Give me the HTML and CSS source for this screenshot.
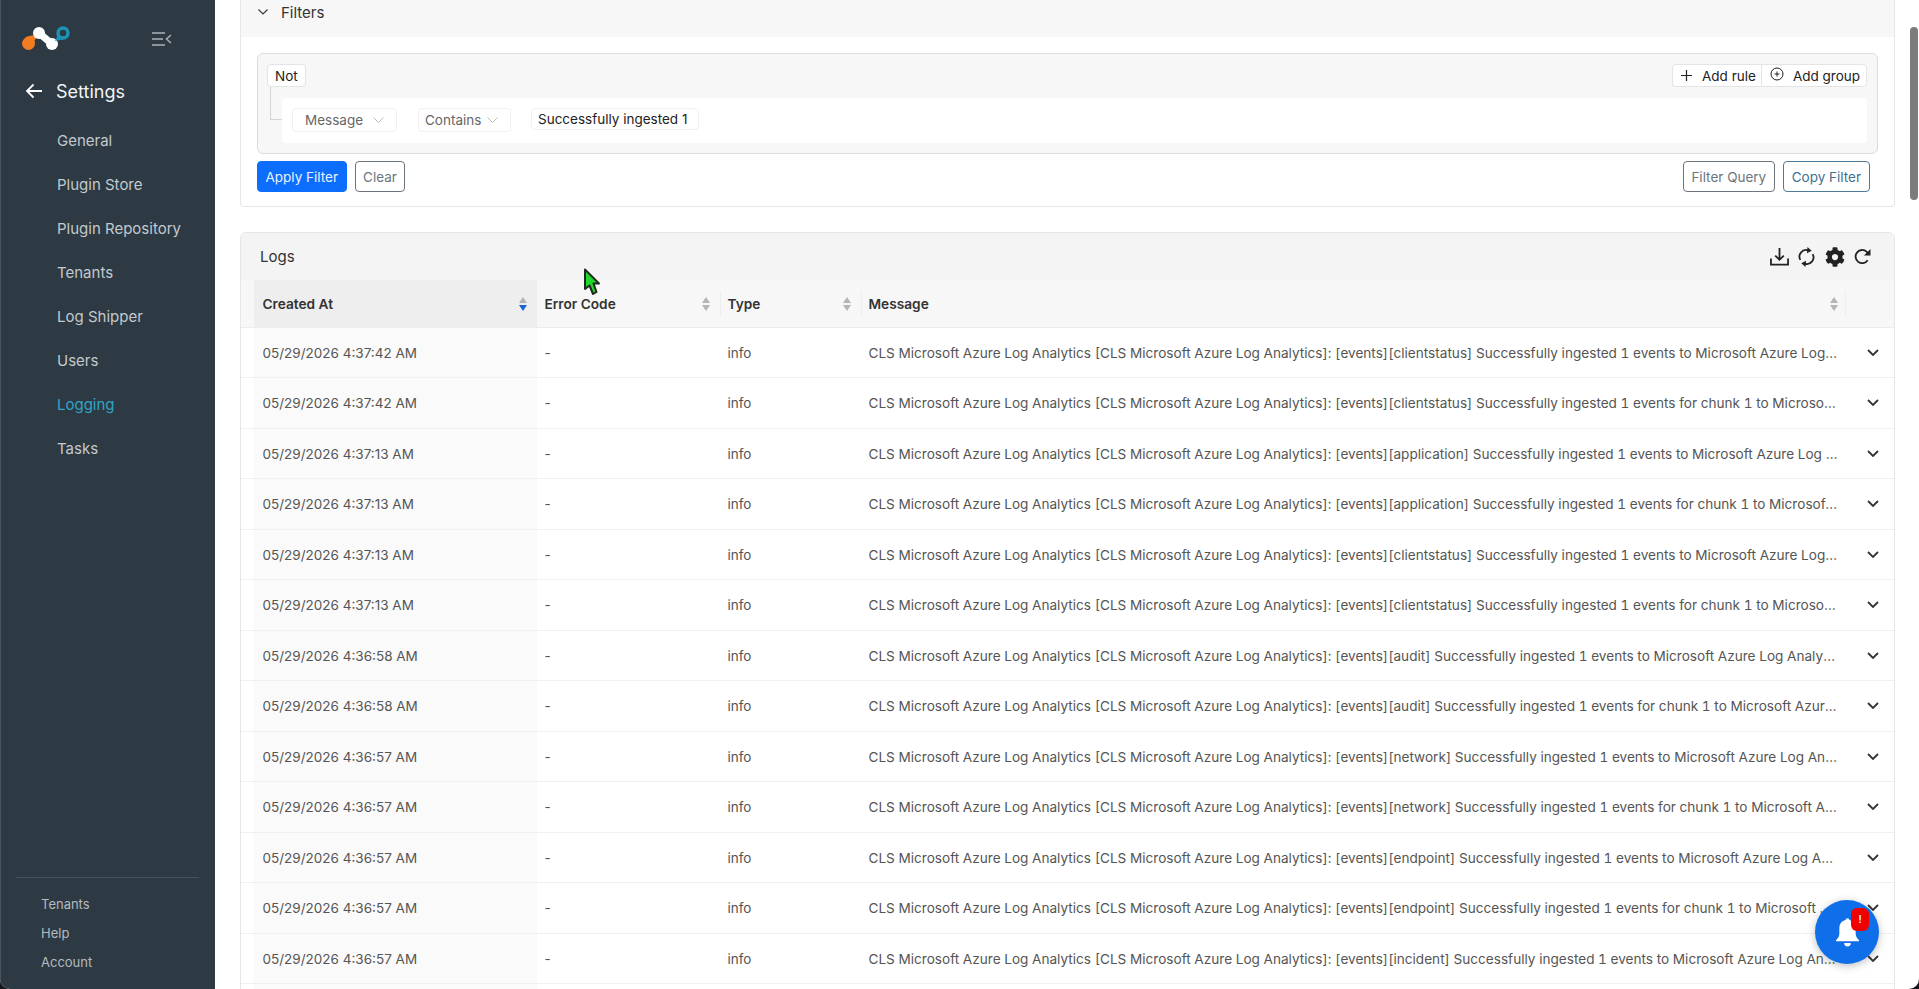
FILE: index.html
```html
<!DOCTYPE html>
<html lang="en">
<head>
    <meta charset="UTF-8">
    <title>Settings - Logging</title>
    <link rel="stylesheet" href="styles.css">
</head>
<body>
    <div class="app">
        <aside class="sidebar">
            <div class="brand">
                <svg class="logo" width="52" height="28" viewBox="0 0 52 28">
                    <path d="M5 11.500C2 13.500 0 15.500 0 18.500a6.500 6.500 0 0 0 13 0c0-1 0-2-.5-3L17 9z" fill="#f47c20"/>
                    <path d="M17 8L30 19" stroke="#fff" stroke-width="7"/>
                    <circle cx="17" cy="8" r="6" fill="#fff"/>
                    <circle cx="30" cy="19" r="6" fill="#fff"/>
                    <path d="M33 16L37 8l6 6z" fill="#1a93b5"/>
                    <circle cx="41" cy="8" r="5" fill="#2d3943" stroke="#1a93b5" stroke-width="3.500"/>
                </svg>
                <svg class="toggle" width="20" height="14" viewBox="0 0 20 14" fill="none" stroke="#a9b2b8" stroke-width="1.500">
                    <path d="M0 1h13M0 7h11M0 13h13M19 3l-4.500 4 4.500 4"/>
                </svg>
            </div>
            <div class="back-row">
                <svg width="18" height="16" viewBox="0 0 18 16" fill="none" stroke="#fff" stroke-width="1.800">
                    <path d="M17 8H2M8.500 1.500L2 8l6.500 6.500"/>
                </svg>
                <span class="back-title">Settings</span>
            </div>
            <nav class="side-nav">
                <a>General</a>
                <a>Plugin Store</a>
                <a>Plugin Repository</a>
                <a>Tenants</a>
                <a>Log Shipper</a>
                <a>Users</a>
                <a class="active">Logging</a>
                <a>Tasks</a>
            </nav>
            <div class="side-foot">
                <a>Tenants</a>
                <a>Help</a>
                <a>Account</a>
            </div>
        </aside>

        <main class="content">
            <section class="card">
                <div class="card-head filters-head">
                    <svg width="10" height="6" viewBox="0 0 10 6" fill="none" stroke="#333" stroke-width="1.100"><path d="M.5.5L5 5 9.500.5"/></svg>
                    <span>Filters</span>
                </div>
                <div class="filter-body">
                    <div class="query-box">
                        <div class="query-top">
                            <button class="qb-btn">Not</button>
                            <div class="qb-group">
                                <button class="qb-btn">
                                    <svg width="13" height="13" viewBox="0 0 13 13" stroke="#222" stroke-width="1.200"><path d="M6.500 1v11M1 6.500h11"/></svg>
                                    Add rule
                                </button>
                                <button class="qb-btn">
                                    <svg class="group-icon" width="14" height="14" viewBox="0 0 14 14" fill="none" stroke="#222"><circle cx="7" cy="7" r="6"/><path d="M7 4.500v5M4.500 7h5"/></svg>
                                    Add group
                                </button>
                            </div>
                        </div>
                        <div class="rule-row">
                            <span class="rule-line"></span>
                            <div class="rule-select field-select">Message
                                <svg width="11" height="7" viewBox="0 0 11 7" fill="none" stroke="#bbb"><path d="M.5.500l5 5 5-5"/></svg>
                            </div>
                            <div class="rule-select op-select">Contains
                                <svg width="11" height="7" viewBox="0 0 11 7" fill="none" stroke="#bbb"><path d="M.5.500l5 5 5-5"/></svg>
                            </div>
                            <div class="rule-value">Successfully ingested 1</div>
                        </div>
                    </div>
                    <div class="filter-actions">
                        <button class="btn btn-primary">Apply Filter</button>
                        <button class="btn">Clear</button>
                        <span class="spacer"></span>
                        <button class="btn">Filter Query</button>
                        <button class="btn btn-copy">Copy Filter</button>
                    </div>
                </div>
            </section>

            <section class="card logs-card">
                <div class="card-head logs-head">
                    <span>Logs</span>
                    <div class="log-tools">
                        <svg width="19" height="19" viewBox="0 0 20 20" fill="none" stroke="#222" stroke-width="1.900"><path d="M1 12v6.500h18V12M10 1v12M5.500 9l4.500 4.500L14.500 9"/></svg>
                        <svg width="17" height="20" viewBox="0 0 18 21" fill="none" stroke="#222" stroke-width="1.900"><path d="M2.500 13.500A7 7 0 0 1 11 3.500M15.500 7.500A7 7 0 0 1 7 17.500"/><path d="M10 0l4.500 4L9.500 6.500zM8 21l-4.500-4L8.500 14.500z" fill="#222" stroke="none"/></svg>
                        <svg width="20" height="20" viewBox="0 0 512 512" fill="#222"><path d="M487.400 315.700l-42.600-24.600c4.300-23.200 4.300-47 0-70.200l42.600-24.600c4.900-2.800 7.100-8.600 5.500-14-11.100-35.600-30-67.800-54.700-94.600-3.800-4.100-10-5.100-14.800-2.300L380.800 110c-17.900-15.400-38.500-27.300-60.800-35.100V25.800c0-5.600-3.900-10.500-9.400-11.700-36.700-8.200-74.300-7.800-109.200 0-5.500 1.200-9.400 6.100-9.400 11.700V75c-22.200 7.900-42.800 19.800-60.800 35.100L88.700 85.500c-4.900-2.800-11-1.900-14.800 2.300-24.700 26.700-43.600 58.900-54.700 94.600-1.700 5.400.6 11.200 5.500 14L67.300 221c-4.300 23.200-4.300 47 0 70.200l-42.600 24.600c-4.900 2.800-7.100 8.600-5.500 14 11.100 35.600 30 67.800 54.700 94.600 3.800 4.100 10 5.100 14.800 2.300l42.600-24.600c17.900 15.400 38.500 27.300 60.800 35.100v49.200c0 5.600 3.900 10.500 9.400 11.700 36.700 8.200 74.300 7.800 109.200 0 5.500-1.200 9.400-6.100 9.400-11.700v-49.200c22.200-7.900 42.800-19.800 60.800-35.100l42.600 24.600c4.900 2.800 11 1.900 14.800-2.300 24.700-26.700 43.600-58.900 54.700-94.600 1.500-5.500-.7-11.300-5.600-14.100zM256 336c-44.100 0-80-35.900-80-80s35.900-80 80-80 80 35.900 80 80-35.900 80-80 80z"/></svg>
                        <svg width="17" height="17" viewBox="0 0 18 17" fill="none" stroke="#222" stroke-width="1.900"><path d="M14.500 12.500A7 7 0 1 1 13.500 3.500L16 6"/><path d="M17.500.5v7h-7z" fill="#222" stroke="none"/></svg>
                    </div>
                </div>
                <table class="log-table">
                    <colgroup>
                        <col class="c-pad"><col class="c-created"><col class="c-code"><col class="c-type"><col><col class="c-open">
                    </colgroup>
                    <thead>
                        <tr>
                            <th></th>
                            <th class="sorted"><div class="th-in">Created At<span class="sorter"><i class="up"></i><i class="down on"></i></span></div></th>
                            <th><div class="th-in">Error Code<span class="sorter"><i class="up"></i><i class="down"></i></span></div></th>
                            <th class="div-left"><div class="th-in">Type<span class="sorter"><i class="up"></i><i class="down"></i></span></div></th>
                            <th class="div-left"><div class="th-in th-last">Message<span class="sorter"><i class="up"></i><i class="down"></i></span></div></th>
                            <th class="div-left"></th>
                        </tr>
                    </thead>
                    <tbody>
                        <tr><td></td><td class="sorted">05/29/2026 4:37:42 AM</td><td>-</td><td>info</td><td class="msg">CLS Microsoft Azure Log Analytics [CLS Microsoft Azure Log Analytics]: [events][clientstatus] Successfully ingested 1 events to Microsoft Azure Log Analytics</td><td class="open"><svg width="12" height="7" viewBox="0 0 12 7"><path d="M1 1l5 5 5-5"/></svg></td></tr>
                        <tr><td></td><td class="sorted">05/29/2026 4:37:42 AM</td><td>-</td><td>info</td><td class="msg">CLS Microsoft Azure Log Analytics [CLS Microsoft Azure Log Analytics]: [events][clientstatus] Successfully ingested 1 events for chunk 1 to Microsoft Azure Log Analytics</td><td class="open"><svg width="12" height="7" viewBox="0 0 12 7"><path d="M1 1l5 5 5-5"/></svg></td></tr>
                        <tr><td></td><td class="sorted">05/29/2026 4:37:13 AM</td><td>-</td><td>info</td><td class="msg">CLS Microsoft Azure Log Analytics [CLS Microsoft Azure Log Analytics]: [events][application] Successfully ingested 1 events to Microsoft Azure Log Analytics</td><td class="open"><svg width="12" height="7" viewBox="0 0 12 7"><path d="M1 1l5 5 5-5"/></svg></td></tr>
                        <tr><td></td><td class="sorted">05/29/2026 4:37:13 AM</td><td>-</td><td>info</td><td class="msg">CLS Microsoft Azure Log Analytics [CLS Microsoft Azure Log Analytics]: [events][application] Successfully ingested 1 events for chunk 1 to Microsoft Azure Log Analytics</td><td class="open"><svg width="12" height="7" viewBox="0 0 12 7"><path d="M1 1l5 5 5-5"/></svg></td></tr>
                        <tr><td></td><td class="sorted">05/29/2026 4:37:13 AM</td><td>-</td><td>info</td><td class="msg">CLS Microsoft Azure Log Analytics [CLS Microsoft Azure Log Analytics]: [events][clientstatus] Successfully ingested 1 events to Microsoft Azure Log Analytics</td><td class="open"><svg width="12" height="7" viewBox="0 0 12 7"><path d="M1 1l5 5 5-5"/></svg></td></tr>
                        <tr><td></td><td class="sorted">05/29/2026 4:37:13 AM</td><td>-</td><td>info</td><td class="msg">CLS Microsoft Azure Log Analytics [CLS Microsoft Azure Log Analytics]: [events][clientstatus] Successfully ingested 1 events for chunk 1 to Microsoft Azure Log Analytics</td><td class="open"><svg width="12" height="7" viewBox="0 0 12 7"><path d="M1 1l5 5 5-5"/></svg></td></tr>
                        <tr><td></td><td class="sorted">05/29/2026 4:36:58 AM</td><td>-</td><td>info</td><td class="msg">CLS Microsoft Azure Log Analytics [CLS Microsoft Azure Log Analytics]: [events][audit] Successfully ingested 1 events to Microsoft Azure Log Analytics</td><td class="open"><svg width="12" height="7" viewBox="0 0 12 7"><path d="M1 1l5 5 5-5"/></svg></td></tr>
                        <tr><td></td><td class="sorted">05/29/2026 4:36:58 AM</td><td>-</td><td>info</td><td class="msg">CLS Microsoft Azure Log Analytics [CLS Microsoft Azure Log Analytics]: [events][audit] Successfully ingested 1 events for chunk 1 to Microsoft Azure Log Analytics</td><td class="open"><svg width="12" height="7" viewBox="0 0 12 7"><path d="M1 1l5 5 5-5"/></svg></td></tr>
                        <tr><td></td><td class="sorted">05/29/2026 4:36:57 AM</td><td>-</td><td>info</td><td class="msg">CLS Microsoft Azure Log Analytics [CLS Microsoft Azure Log Analytics]: [events][network] Successfully ingested 1 events to Microsoft Azure Log Analytics</td><td class="open"><svg width="12" height="7" viewBox="0 0 12 7"><path d="M1 1l5 5 5-5"/></svg></td></tr>
                        <tr><td></td><td class="sorted">05/29/2026 4:36:57 AM</td><td>-</td><td>info</td><td class="msg">CLS Microsoft Azure Log Analytics [CLS Microsoft Azure Log Analytics]: [events][network] Successfully ingested 1 events for chunk 1 to Microsoft Azure Log Analytics</td><td class="open"><svg width="12" height="7" viewBox="0 0 12 7"><path d="M1 1l5 5 5-5"/></svg></td></tr>
                        <tr><td></td><td class="sorted">05/29/2026 4:36:57 AM</td><td>-</td><td>info</td><td class="msg">CLS Microsoft Azure Log Analytics [CLS Microsoft Azure Log Analytics]: [events][endpoint] Successfully ingested 1 events to Microsoft Azure Log Analytics</td><td class="open"><svg width="12" height="7" viewBox="0 0 12 7"><path d="M1 1l5 5 5-5"/></svg></td></tr>
                        <tr><td></td><td class="sorted">05/29/2026 4:36:57 AM</td><td>-</td><td>info</td><td class="msg">CLS Microsoft Azure Log Analytics [CLS Microsoft Azure Log Analytics]: [events][endpoint] Successfully ingested 1 events for chunk 1 to Microsoft Azure Log Analytics</td><td class="open"><svg width="12" height="7" viewBox="0 0 12 7"><path d="M1 1l5 5 5-5"/></svg></td></tr>
                        <tr><td></td><td class="sorted">05/29/2026 4:36:57 AM</td><td>-</td><td>info</td><td class="msg">CLS Microsoft Azure Log Analytics [CLS Microsoft Azure Log Analytics]: [events][incident] Successfully ingested 1 events to Microsoft Azure Log Analytics</td><td class="open"><svg width="12" height="7" viewBox="0 0 12 7"><path d="M1 1l5 5 5-5"/></svg></td></tr>
                        <tr><td></td><td class="sorted"></td><td></td><td></td><td></td><td></td></tr>
                    </tbody>
                </table>
            </section>
        </main>
    </div>

    <div class="fake-scroll"></div>

    <svg class="cursor" width="18" height="28" viewBox="0 0 18 28">
        <path d="M2 1.500L16 15.500H10.500L13.500 24 10 26 6.500 17.500 2 21z" fill="#22d62c" stroke="#1d2a1d" stroke-width="2" stroke-linejoin="round"/>
    </svg>

    <div class="bell-btn">
        <svg width="23" height="29" viewBox="0 0 24 30" fill="#fff">
            <path d="M12 0a2 2 0 0 1 2 2c4.500 1 6.500 4.500 6.500 9v5c0 3 1.500 5 3.500 7v1H0v-1c2-2 3.500-4 3.500-7v-5c0-4.500 2-8 6.500-9a2 2 0 0 1 2-2zM8.500 26h7a3.500 3.500 0 0 1-7 0z"/>
        </svg>
        <span class="bell-badge">!</span>
    </div>
</body>
</html>
```

FILE: styles.css
```css
* {
  box-sizing: border-box;
}

html, body {
  margin: 0;
  height: 100%;
  overflow: hidden;
  background-color: #14161a;
  font-family: Inter, "Liberation Sans", sans-serif;
}

.app {
  display: flex;
  height: 989px;
  background-color: #fff;
  border-radius: 0 0 10px 10px;
  overflow: hidden;
}

/* sidebar */
.sidebar {
  width: 215px;
  flex-shrink: 0;
  display: flex;
  flex-direction: column;
  background-color: #2d3943;
  border-left: 1px solid #4a555e;
}

.brand {
  display: flex;
  align-items: center;
  height: 77px;
  padding: 0 0 0 21px;
}

.toggle {
  margin-left: 78px;
}

.back-row {
  display: flex;
  align-items: center;
  gap: 13px;
  height: 28px;
  padding-left: 24px;
}

.back-title {
  color: #f2f4f5;
  font-size: 18px;
}

.side-nav {
  display: flex;
  flex-direction: column;
  padding: 14px 0 0 56px;
}

.side-nav a {
  height: 44px;
  line-height: 44px;
  font-size: 15px;
  color: #c3c9cd;
}

.side-nav a.active {
  color: #2fa6c4;
}

.side-foot {
  margin: auto 16px 0 15px;
  padding: 12px 0 12px 25px;
  border-top: 1px solid #46525b;
  display: flex;
  flex-direction: column;
}

.side-foot a {
  height: 29px;
  line-height: 29px;
  font-size: 13px;
  color: #b4bbc0;
}

/* main area */
.content {
  flex: 1;
  padding-right: 24px;
  padding-left: 25px;
  min-width: 0;
}

.card {
  border: 1px solid #e6e6e6;
  border-top: none;
  border-radius: 0 0 4px 4px;
  background-color: #fff;
}

.card-head {
  display: flex;
  align-items: center;
  background-color: #f7f7f7;
}

.filters-head {
  height: 37px;
  padding: 0 0 13px 17px;
  gap: 13px;
  font-size: 15px;
  color: #333;
}

.filter-body {
  padding: 16px 16px 14px;
}

.query-box {
  height: 101px;
  padding: 10px 10px 0 9px;
  background-color: #f7f7f7;
  border: 1px solid #dcdcdc;
  border-radius: 6px;
}

.query-top {
  display: flex;
  justify-content: space-between;
  align-items: flex-start;
}

.qb-btn {
  display: flex;
  align-items: center;
  gap: 9px;
  height: 23px;
  padding: 0 7px;
  font-family: inherit;
  font-size: 13.5px;
  white-space: nowrap;
  color: #222;
  background-color: #fff;
  border: 1px solid #e4e4e4;
  border-radius: 4px;
}

.qb-group {
  display: flex;
}

.qb-group .qb-btn:first-child {
  padding-right: 5px;
  border-radius: 4px 0 0 4px;
  border-right: none;
}

.qb-group .qb-btn:last-child {
  padding: 0 6px 0 8px;
  border-radius: 0 4px 4px 0;
}

.group-icon {
  margin-top: -3px;
}

.rule-row {
  position: relative;
  display: flex;
  align-items: flex-start;
  margin: 11px 0 0 15px;
  height: 45px;
  padding: 10px 0 0 10px;
  background-color: #fff;
  border-radius: 4px;
}

.rule-line {
  position: absolute;
  left: -12px;
  top: -11px;
  width: 12px;
  height: 33px;
  border-left: 1px solid #d5d5d5;
  border-bottom: 1px solid #d5d5d5;
}

.rule-select {
  display: flex;
  align-items: center;
  justify-content: space-between;
  height: 24px;
  padding: 0 12px 0 12px;
  font-size: 13.5px;
  color: #666;
  border: 1px solid #f0f0f0;
  border-radius: 4px;
}

.field-select {
  width: 105px;
  margin-right: 21px;
}

.op-select {
  width: 93px;
  margin-right: 20px;
  padding: 0 12px 0 6px;
}

.rule-value {
  width: 168px;
  height: 22px;
  line-height: 20px;
  padding-left: 6px;
  font-size: 13.5px;
  color: #222;
  border: 1px solid #f0f0f0;
  border-radius: 4px;
}

.filter-actions {
  display: flex;
  gap: 8px;
  margin-top: 7px;
  padding-right: 8px;
}

.spacer {
  flex: 1;
}

.btn {
  height: 31px;
  padding: 0 7.5px;
  font-family: inherit;
  font-size: 13.5px;
  color: #6c757d;
  background-color: #fff;
  border: 1px solid #6c757d;
  border-radius: 4px;
}

.btn-primary {
  color: #eaf3ff;
  background-color: #0d6efd;
  border-color: #0d6efd;
}

.btn-copy {
  padding: 0 8px;
  color: #3f6f94;
  border-color: #4c7a99;
}

/* logs */
.logs-card {
  margin-top: 25px;
  border-top: 1px solid #e6e6e6;
  border-radius: 6px 6px 0 0;
}

.logs-head {
  justify-content: space-between;
  height: 47px;
  padding: 0 23px 0 19px;
  font-size: 15px;
  color: #333;
  background-color: #f4f4f4;
  border-radius: 6px 6px 0 0;
}

.log-tools {
  display: flex;
  align-items: center;
  gap: 9.5px;
}

.log-table {
  width: 100%;
  table-layout: fixed;
  border-collapse: collapse;
  font-size: 13.5px;
  color: #555;
}

.c-pad { width: 13px; }
.c-created { width: 283px; }
.c-code { width: 183px; }
.c-type { width: 141px; }
.c-open { width: 49px; }

.log-table th {
  height: 47px;
  padding: 2px 7.5px 0;
  font-size: 13.7px;
  font-weight: 600;
  text-align: left;
  color: #333;
  background-color: #f7f7f7;
  border-bottom: 1px solid #ececec;
  position: relative;
}

.log-table th.sorted {
  padding-left: 8.5px;
  background-color: #eeeeee;
}

.th-in {
  display: flex;
  align-items: center;
  justify-content: space-between;
  padding-right: 3px;
}

.th-in.th-last {
  padding-right: 0;
}

.div-left::before {
  content: "";
  position: absolute;
  left: 0;
  top: 11px;
  bottom: 11px;
  width: 1px;
  background-color: #eeeeee;
}

.sorter {
  display: flex;
  flex-direction: column;
  gap: 2px;
}

.sorter i {
  display: block;
  border-left: 4px solid transparent;
  border-right: 4px solid transparent;
}

.sorter .up {
  border-bottom: 6px solid #b5b5b5;
}

.sorter .down {
  border-top: 6px solid #b5b5b5;
}

.sorter .down.on {
  border-top-color: #1a66d6;
}

.log-table td {
  height: 50.5px;
  padding: 1px 7.5px 0;
  white-space: nowrap;
  overflow: hidden;
  text-overflow: ellipsis;
  border-bottom: 1px solid #f0f0f0;
}

.log-table td.msg {
  font-size: 13.6px;
  font-variant-numeric: tabular-nums;
}

.log-table td.sorted {
  padding-left: 8.5px;
  background-color: #fafafa;
}

.log-table td.open {
  padding: 0 0 0 22px;
}

.open svg {
  display: block;
  fill: none;
  stroke: #333;
  stroke-width: 1.8;
}

/* things lying over the page */
.fake-scroll {
  position: absolute;
  left: 1910px;
  top: 27px;
  width: 8px;
  height: 173px;
  background-color: #7c7c7c;
  border-radius: 4px;
}

.cursor {
  position: absolute;
  left: 583px;
  top: 268px;
}

.bell-btn {
  position: absolute;
  left: 1815px;
  top: 900px;
  width: 64px;
  height: 64px;
  display: flex;
  align-items: center;
  justify-content: center;
  background-color: #0f6fe8;
  border-radius: 50%;
  box-shadow: 0 2px 8px rgba(0, 0, 0, 0.25);
}

.bell-badge {
  position: absolute;
  left: 36px;
  top: 8px;
  width: 18px;
  height: 23px;
  line-height: 23px;
  text-align: center;
  font-size: 10px;
  font-weight: 600;
  color: #fff;
  background-color: #f00000;
  border-radius: 6px;
}
```
